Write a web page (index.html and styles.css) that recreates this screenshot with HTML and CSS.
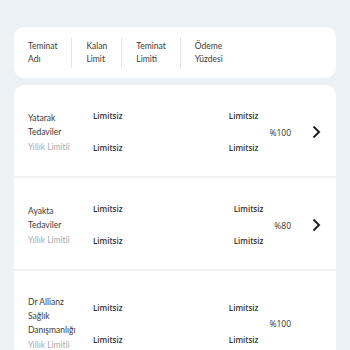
FILE: index.html
```html
<!DOCTYPE html>
<html lang="tr">
<head>
<meta charset="utf-8">
<link rel="stylesheet" href="styles.css">
</head>
<body>
<div class="page">
  <div class="card head">
    <div class="hcol">Teminat<br>Adı</div>
    <div class="hcol">Kalan<br>Limit</div>
    <div class="hcol">Teminat<br>Limiti</div>
    <div class="hcol">Ödeme<br>Yüzdesi</div>
  </div>
  <div class="card list">
    <div class="row">
      <div class="name"><div>Yatarak</div><div>Tedaviler</div><div class="sub">Yıllık Limitli</div></div>
      <div class="vals"><span>Limitsiz</span><span>Limitsiz</span></div>
      <div class="vals right"><span>Limitsiz</span><span>Limitsiz</span></div>
      <div class="pct">%100</div>
      <div class="chev"><svg width="9" height="14" viewBox="0 0 9 14"><path d="M1.5 1.5 L7 7 L1.5 12.5" fill="none" stroke="#222" stroke-width="2"/></svg></div>
    </div>
    <div class="row">
      <div class="name"><div>Ayakta</div><div>Tedaviler</div><div class="sub">Yıllık Limitli</div></div>
      <div class="vals"><span>Limitsiz</span><span>Limitsiz</span></div>
      <div class="vals right"><span>Limitsiz</span><span>Limitsiz</span></div>
      <div class="pct">%80</div>
      <div class="chev"><svg width="9" height="14" viewBox="0 0 9 14"><path d="M1.5 1.5 L7 7 L1.5 12.5" fill="none" stroke="#222" stroke-width="2"/></svg></div>
    </div>
    <div class="row">
      <div class="name"><div>Dr Allianz</div><div>Sağlık</div><div>Danışmanlığı</div><div class="sub">Yıllık Limitli</div></div>
      <div class="vals"><span>Limitsiz</span><span>Limitsiz</span></div>
      <div class="vals right"><span>Limitsiz</span><span>Limitsiz</span></div>
      <div class="pct">%100</div>
      <div class="chev"></div>
    </div>
  </div>
</div>
</body>
</html>
```
FILE: styles.css
```css
html, body {
  margin: 0;
  padding: 0;
  background: #ebf1f5;
}
body {
  font-family: Lato, "Noto Sans", sans-serif;
  color: #3a3a3a;
  font-size: 8.5px;
}
.page {
  padding: 27px 14px 0 14px;
  display: flex;
  flex-direction: column;
  gap: 7px;
}
.card {
  background: #fff;
  border-radius: 10px;
}
.head {
  display: flex;
  padding: 10px 0;
}
.hcol {
  padding: 3px 14px 2px 14px;
  line-height: 13px;
  height: 31px;
  box-sizing: border-box;
  border-left: 1px solid #e6e6e6;
}
.hcol:first-child {
  border-left: none;
}
.list {
  display: flex;
  flex-direction: column;
}
.row {
  display: flex;
  align-items: center;
  padding: 24px 15px 21px 14px;
  border-bottom: 2px solid #f1f1f1;
}
.name {
  width: 65px;
  line-height: 14px;
}
.name .sub {
  color: #ababab;
  margin-top: 1px;
}
.vals {
  display: flex;
  flex-direction: column;
  gap: 18px;
  line-height: 14px;
  font-family: "Open Sans", sans-serif;
  font-size: 8px;
  font-weight: 600;
  color: #333;
}
.vals.right {
  margin-left: auto;
}
.pct {
  margin-left: 11px;
  font-family: "Open Sans", sans-serif;
  font-size: 8.5px;
  color: #333;
}
.chev {
  width: 9px;
  height: 14px;
  margin-left: 21px;
}
```
